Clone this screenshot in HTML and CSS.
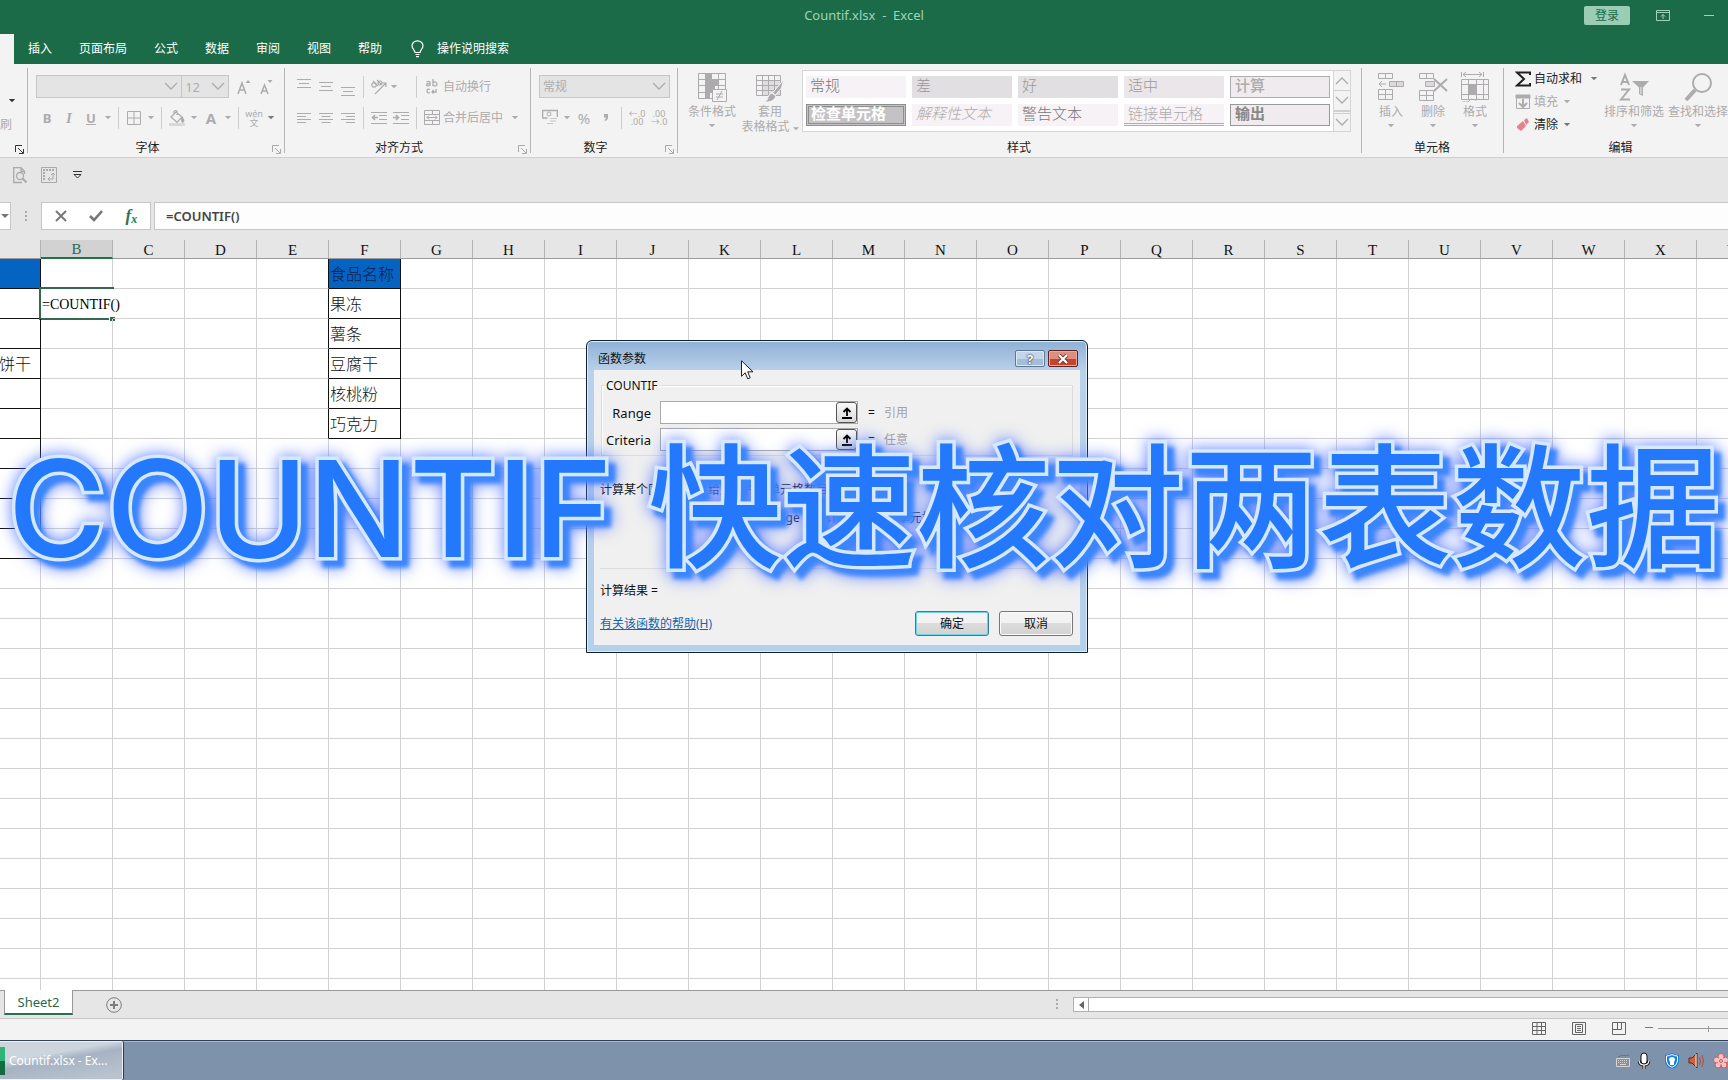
FILE: index.html
```html
<!DOCTYPE html>
<html lang="zh-CN">
<head>
<meta charset="utf-8">
<title>Countif.xlsx - Excel</title>
<link rel="stylesheet" href="styles.css">
</head>
<body>
<svg class="sprite" aria-hidden="true">
  <symbol id="caret" viewBox="0 0 8 5"><path d="M0 0h8L4 4z" fill="currentColor"/></symbol>
  <symbol id="chev" viewBox="0 0 14 9"><path d="M1 1l6 6 6-6" fill="none" stroke="currentColor" stroke-width="1.3"/></symbol>
  <symbol id="launch" viewBox="0 0 9 9"><path d="M.5 7V.5H7M3 3l5 5M8.500 4v4.500H4" fill="none" stroke="currentColor"/></symbol>
</svg>

<header class="titlebar">
  <div class="caption">
    <span class="doc-title">Countif.xlsx&nbsp; -&nbsp; Excel</span>
    <div class="window-tools">
      <button class="login">登录</button>
      <button class="plain" aria-label="功能区显示选项"><svg width="14" height="11" viewBox="0 0 14 11" fill="none" stroke="currentColor"><path d="M.5.5h13v10H.5zM.5 2.500h13M7 9V4.500M5 6.500l2-2 2 2"/></svg></button>
      <button class="plain" aria-label="最小化"><svg width="10" height="11" viewBox="0 0 10 11" stroke="currentColor"><path d="M0 5.500h10"/></svg></button>
    </div>
  </div>
  <nav class="tabs">
    <span class="tab-active"></span>
    <a href="#">插入</a><a href="#">页面布局</a><a href="#">公式</a><a href="#">数据</a><a href="#">审阅</a><a href="#">视图</a><a href="#">帮助</a>
    <a href="#" class="tell"><svg width="13" height="18" viewBox="0 0 13 18" fill="none" stroke="currentColor" stroke-width="1.200"><path d="M4 12.500C4 10 1 9 1 5.800a5.500 5 0 0 1 11 0C12 9 9 10 9 12.500zM4.500 14.500h4M5 16.700h3"/></svg>操作说明搜索</a>
  </nav>
</header>

<section class="ribbon">
  <div class="group clip">
    <div class="group-body"><svg class="car dark" width="6" height="4"><use href="#caret"/></svg><span>刷</span></div>
    <div class="group-title"><svg class="launch dark" width="9" height="9"><use href="#launch"/></svg></div>
  </div>

  <div class="group font">
    <div class="group-body">
      <div class="row">
        <button class="combo family" aria-label="字体"><span></span><svg width="14" height="9"><use href="#chev"/></svg></button>
        <button class="combo size" aria-label="字号"><span>12</span><svg width="14" height="9"><use href="#chev"/></svg></button>
        <button class="tb grow" aria-label="增大字号"><svg width="14" height="16" viewBox="0 0 14 16" fill="none" stroke="currentColor" stroke-width="1.500"><path d="M1 15L5 4l4 11M2.500 11h5"/><path d="M8.500 4L11 1l2.500 3z" fill="currentColor" stroke="none"/></svg></button>
        <button class="tb" aria-label="减小字号"><svg width="13" height="16" viewBox="0 0 13 16" fill="none" stroke="currentColor" stroke-width="1.500"><path d="M1 15l3.500-9L8 15M2.500 12h4"/><path d="M7.500 1h5L10 4z" fill="currentColor" stroke="none"/></svg></button>
      </div>
      <div class="row">
        <button class="tb"><b>B</b></button><button class="tb"><i>I</i></button><button class="tb"><u>U</u></button><svg class="car"><use href="#caret"/></svg>
        <span class="sep"></span>
        <button class="tb" aria-label="边框"><svg width="14" height="14" viewBox="0 0 14 14" fill="none" stroke="currentColor"><path d="M.5.5h13v13H.5zM7 .5v13M.5 7h13"/></svg></button><svg class="car"><use href="#caret"/></svg>
        <span class="sep"></span>
        <button class="tb" aria-label="填充颜色"><svg width="16" height="16" viewBox="0 0 16 16" fill="none" stroke="currentColor" stroke-width="1.200"><path d="M2 7l5-5 6 5-5 5.500zM5 4V1.500q1.500-2 3 0V5"/><path d="M13 7q3 4 1 5t-1-5z" fill="currentColor"/><path d="M0 14.500h16" stroke="#dcd6dc" stroke-width="3"/></svg></button><svg class="car"><use href="#caret"/></svg>
        <button class="tb"><b class="big-a">A</b></button><svg class="car"><use href="#caret"/></svg>
        <span class="sep"></span>
        <button class="tb pinyin"><span>wén</span><span>文</span></button><svg class="car mid"><use href="#caret"/></svg>
      </div>
    </div>
    <div class="group-title">字体<svg class="launch" width="9" height="9"><use href="#launch"/></svg></div>
  </div>

  <div class="group align">
    <div class="group-body">
      <div class="row">
        <button class="tb" aria-label="顶端对齐"><svg width="14" height="18" viewBox="0 0 14 18" stroke="currentColor"><path d="M0 1.500h14M2 5.500h10M0 9.500h14"/></svg></button>
        <button class="tb" aria-label="垂直居中"><svg width="14" height="18" viewBox="0 0 14 18" stroke="currentColor"><path d="M0 4.500h14M2 8.500h10M0 12.500h14"/></svg></button>
        <button class="tb" aria-label="底端对齐"><svg width="14" height="18" viewBox="0 0 14 18" stroke="currentColor"><path d="M0 9.500h14M2 13.500h10M0 17.500h14"/></svg></button>
        <span class="sep"></span>
        <button class="tb" aria-label="方向"><svg width="18" height="16" viewBox="0 0 18 16" fill="none" stroke="currentColor" stroke-width="1.200"><circle cx="4" cy="6" r="2.200"/><path d="M3 2l5 5M7 1l5 5"/><circle cx="10" cy="4" r="2"/><path d="M5 15L16 4M12 4h4v4"/></svg></button><svg class="car wide"><use href="#caret"/></svg>
        <span class="sep"></span>
        <button class="tb labelled"><svg width="22" height="16" viewBox="0 0 22 16" fill="none" stroke="currentColor" stroke-width="1.300"><path d="M5.500 3q3.500-1.500 3.500.5V7M9 4.500q-4 0-3.500 1.500T9 6.500M12 0v7M12 4q1-1.500 2.500-1T16 5t-1.500 2T12 6M9 10.500q-3-1-3 1.500t3 1.500M15 10v3h-4M12.500 11L11 13l1.500 1.500"/></svg>自动换行</button>
      </div>
      <div class="row">
        <button class="tb" aria-label="左对齐"><svg width="14" height="12" viewBox="0 0 14 12" stroke="currentColor"><path d="M0 1.500h14M0 4.500h9M0 7.500h14M0 10.500h9"/></svg></button>
        <button class="tb" aria-label="居中"><svg width="14" height="12" viewBox="0 0 14 12" stroke="currentColor"><path d="M0 1.500h14M2.500 4.500h9M0 7.500h14M2.500 10.500h9"/></svg></button>
        <button class="tb" aria-label="右对齐"><svg width="14" height="12" viewBox="0 0 14 12" stroke="currentColor"><path d="M0 1.500h14M5 4.500h9M0 7.500h14M5 10.500h9"/></svg></button>
        <span class="sep"></span>
        <button class="tb" aria-label="减少缩进"><svg width="16" height="14" viewBox="0 0 16 14" fill="none" stroke="currentColor"><path d="M0 1.500h16M8 4.500h8M8 8.500h8M0 12.500h16"/><path d="M7 6.500H1.500M4 4L1.500 6.500 4 9" stroke-width="1.600"/></svg></button>
        <button class="tb" aria-label="增加缩进"><svg width="16" height="14" viewBox="0 0 16 14" fill="none" stroke="currentColor"><path d="M0 1.500h16M8 4.500h8M8 8.500h8M0 12.500h16"/><path d="M0 6.500h5.500M3 4l2.500 2.500L3 9" stroke-width="1.600"/></svg></button>
        <span class="sep"></span>
        <button class="tb labelled"><svg width="22" height="15" viewBox="0 0 22 15" fill="none" stroke="currentColor"><path d="M3.500.5h15v14h-15zM3.500 4.500h15M3.500 10.500h15M11.500.5v4M11.500 10.500v4M6 7.500h10M8 5.500l-2 2 2 2M14 5.500l2 2-2 2"/></svg>合并后居中</button><svg class="car far"><use href="#caret"/></svg>
      </div>
    </div>
    <div class="group-title">对齐方式<svg class="launch" width="9" height="9"><use href="#launch"/></svg></div>
  </div>

  <div class="group number">
    <div class="group-body">
      <div class="row"><button class="combo format"><span>常规</span><svg width="14" height="9"><use href="#chev"/></svg></button></div>
      <div class="row">
        <button class="tb" aria-label="会计数字格式"><svg width="16" height="17" viewBox="0 0 16 17" fill="none" stroke="currentColor"><path d="M.5 1v8h5M.5 1.500h15V8" stroke-width="1.600"/><circle cx="7" cy="5" r="2"/><path d="M8 9.500h7M8 12h6M5 14.500h6" stroke="#c9c5c9"/></svg></button><svg class="car"><use href="#caret"/></svg>
        <button class="tb pct">%</button><button class="tb comma" aria-label="千位分隔样式"><svg width="6" height="9" viewBox="0 0 6 9" fill="currentColor"><path d="M1 1h4v3q0 3-3 4l-.5-1Q3 6 3 4.500H1z"/></svg></button>
        <span class="sep"></span>
        <button class="tb dec"><span>←.0</span><span>.00</span></button>
        <button class="tb dec"><span>.00</span><span>→.0</span></button>
      </div>
    </div>
    <div class="group-title">数字<svg class="launch" width="9" height="9"><use href="#launch"/></svg></div>
  </div>

  <div class="group styles">
    <div class="group-body across">
      <button class="large cond"><svg width="30" height="30" viewBox="0 0 30 30" fill="none" stroke="currentColor"><path d="M1.500 1.500h27v25h-27zM1.500 7.500h27M1.500 13.500h27M1.500 20.500h27M8.500 1v25M21.500 1v25" /><path d="M9 2h6v5H9zM9 8h12v5H9zM9 14h9v6H9zM9 21h4v5H9z" fill="currentColor" stroke="none"/><path d="M15.500 17.500h14v12h-14z" fill="#f3f3f3"/><path d="M19 22h7M19 25h7M25 19l-5 9"/></svg><span>条件格式</span><svg class="car"><use href="#caret"/></svg></button>
      <button class="large tablefmt"><svg width="30" height="30" viewBox="0 0 30 30" fill="none" stroke="currentColor"><path d="M1.500 3.500h24v20h-24z"/><path d="M7 8h18v15H7z" fill="#dedede" stroke="none"/><path d="M1.500 8.500h24M1.500 13.500h24M1.500 18.500h24M7.500 3v20M13.500 3v20M19.500 3v20"/><path d="M28.500 8l-2 8-6 7-3-2z" fill="currentColor" stroke="#f3f3f3"/><path d="M17 21l4 3q-2 7-13 6 5-1 5-5 1-3 4-4z" fill="currentColor" stroke="#f3f3f3"/></svg><span>套用</span><span>表格格式 <svg width="6" height="4"><use href="#caret"/></svg></span></button>
      <div class="gallery">
        <div class="swatches">
          <button class="sw strong">常规</button><button class="sw grey">差</button><button class="sw grey">好</button><button class="sw rose">适中</button><button class="sw calc">计算</button>
          <button class="sw check">检查单元格</button><button class="sw explain">解释性文本</button><button class="sw strong">警告文本</button><button class="sw linked">链接单元格</button><button class="sw output">输出</button>
        </div>
        <div class="scroller">
          <button aria-label="上一行"><svg class="up" width="14" height="9"><use href="#chev"/></svg></button>
          <button aria-label="下一行"><svg width="14" height="9"><use href="#chev"/></svg></button>
          <button class="more" aria-label="其他"><svg width="14" height="9"><use href="#chev"/></svg></button>
        </div>
      </div>
    </div>
    <div class="group-title">样式</div>
  </div>

  <div class="group cells">
    <div class="group-body across">
      <button class="large"><svg width="28" height="30" viewBox="0 0 28 30" fill="none" stroke="currentColor"><path d="M1.500 1.500h14v5h-14zM8.500 1.500v5M1.500 17.500h14v10h-14zM8.500 17v10M1.500 22.500h14M9 12H2M5 9l-3 3 3 3"/><path d="M12.500 9.500h14v5h-14zM19.500 9v5" fill="#dcd8dc"/></svg><span>插入</span><svg class="car"><use href="#caret"/></svg></button>
      <button class="large"><svg width="30" height="30" viewBox="0 0 30 30" fill="none" stroke="currentColor"><path d="M1.500 1.500h14v5h-14zM8.500 1.500v5M1.500 18.500h14v10h-14zM8.500 18v10M1.500 23.500h14"/><path d="M7.500 9.500h9v5h-9z" fill="#dcd8dc"/><path d="M16 7l13 12M29 7L16 19" stroke-width="2"/></svg><span>删除</span><svg class="car"><use href="#caret"/></svg></button>
      <button class="large"><svg width="30" height="30" viewBox="0 0 30 30" fill="none" stroke="currentColor"><path d="M1.500 0v5M23.500 0v5M3 2.500h19M6 0L3 2.500 6 5M19 0l3 2.500L19 5M1.500 7.500h27v20h-27zM1.500 12.500h27M1.500 22.500h27M8.500 7v20M16.500 7v20M23.500 7v20M2 30h6l3-3 5 1 3-1"/><path d="M9 13h7v9H9z" fill="currentColor"/></svg><span>格式</span><svg class="car"><use href="#caret"/></svg></button>
    </div>
    <div class="group-title">单元格</div>
  </div>

  <div class="group edit">
    <div class="group-body across">
      <div class="edit-list">
        <button class="on sum"><svg width="16" height="16" viewBox="0 0 16 16" fill="none" stroke="currentColor" stroke-width="2"><path d="M15 4V1.500H2L9 8l-7 6.500h13V12"/></svg>自动求和<svg class="car"><use href="#caret"/></svg></button>
        <button><svg width="16" height="16" viewBox="0 0 16 16" fill="none" stroke="currentColor"><path d="M1.500 1.500h13v13h-13z"/><path d="M1 1h14v3H1z" fill="currentColor"/><path d="M8 5v8M4 9l4 4 4-4" stroke-width="2"/></svg>填充<svg class="car"><use href="#caret"/></svg></button>
        <button class="on"><svg width="16" height="16" viewBox="0 0 16 16"><path d="M9 3l3-2 2 4-3 3zM8 4l3 5-5 5-4-3V9z" fill="#e5838d"/></svg>清除<svg class="car"><use href="#caret"/></svg></button>
      </div>
      <button class="large sort"><svg width="30" height="30" viewBox="0 0 30 30" fill="none" stroke="currentColor" stroke-width="2"><path d="M2 13L6 3l4 10M3.500 10h5M2 17.500h8L2 27.500h9"/><path d="M13 9h17l-6 6.500V24l-4-2v-6.500z" fill="currentColor" stroke="none"/><path d="M22 15v7" stroke="#f3f3f3" stroke-width="1"/></svg><span>排序和筛选</span><svg class="car"><use href="#caret"/></svg></button>
      <button class="large sort"><svg width="30" height="30" viewBox="0 0 30 30" fill="none" stroke="currentColor" stroke-width="2"><circle cx="19" cy="11" r="9"/><path d="M12 18L3 28" stroke-width="4"/></svg><span>查找和选择</span><svg class="car"><use href="#caret"/></svg></button>
    </div>
    <div class="group-title">编辑</div>
  </div>
</section>

<div class="quick">
  <button class="plain" aria-label="打印预览"><svg width="14" height="17" viewBox="0 0 14 17" fill="none" stroke="currentColor" stroke-width="1.300"><path d="M9 15.500H.700V.700H8l3.500 3.500V7M8 1v3.500h3.500"/><circle cx="7" cy="9" r="3.500"/><path d="M9.500 11.500l4 4" stroke-width="2"/></svg></button>
  <button class="plain" aria-label="数据透视表"><svg width="16" height="16" viewBox="0 0 16 16" fill="none" stroke="currentColor"><path d="M.5.5h15v15H.5z"/><path d="M2 3h11M3 5v9" stroke-width="2" stroke-dasharray="2 1"/><path d="M7 12h5V6M9 10l-2 2 2 2M10 8l2-2 2 2"/></svg></button>
  <button class="plain ink" aria-label="自定义快速访问工具栏"><svg width="9" height="8" viewBox="0 0 9 8" fill="none" stroke="currentColor"><path d="M0 .5h9M1 3.500h7L4.500 7z"/></svg></button>
</div>

<div class="formula-row">
  <button class="namebox" aria-label="名称框"><svg width="8" height="5"><use href="#caret"/></svg></button>
  <span class="dots"></span>
  <div class="formula-tools">
    <button aria-label="取消"><svg width="12" height="12" viewBox="0 0 12 12" stroke="#777" stroke-width="2"><path d="M1 1l10 10M11 1L1 11"/></svg></button>
    <button aria-label="输入"><svg width="14" height="12" viewBox="0 0 14 12" fill="none" stroke="#777" stroke-width="2.600"><path d="M1 6l4 4 8-9"/></svg></button>
    <button class="fx" aria-label="插入函数"><i>f</i><i class="sub">x</i></button>
  </div>
  <input class="formula" aria-label="编辑栏" value="=COUNTIF()">
</div>

<main class="sheet"><table id="grid"></table></main>

<div class="sheetbar">
  <button class="sheet-tab">Sheet2</button>
  <button class="add" aria-label="新工作表"><svg width="16" height="16" viewBox="0 0 16 16" fill="none" stroke="#7d7d7d"><circle cx="8" cy="8" r="7.300"/><path d="M8 4v8M4 8h8" stroke-width="2"/></svg></button>
  <span class="dots push"></span>
  <div class="hscroll"><button aria-label="向左滚动"><svg width="5" height="8" viewBox="0 0 5 8"><path d="M5 0v8L0 4z" fill="#666"/></svg></button></div>
</div>

<footer class="status">
  <button class="plain" aria-label="普通"><svg width="14" height="13" viewBox="0 0 14 13" fill="none" stroke="currentColor"><path d="M.5.5h13v12H.5zM.5 4.500h13M.5 8.500h13M5 .5v12M9.500.5v12"/></svg></button>
  <button class="plain" aria-label="页面布局"><svg width="14" height="13" viewBox="0 0 14 13" fill="none" stroke="currentColor"><path d="M.5.5h13v12H.5zM3.500 2.500h7v8h-7zM5 4.500h4M5 6.500h4M5 8.500h4"/></svg></button>
  <button class="plain" aria-label="分页预览"><svg width="14" height="13" viewBox="0 0 14 13" fill="none" stroke="currentColor"><path d="M.5.5h13v12H.5zM.5 7.500h9v-7M5.500.5v7"/></svg></button>
  <svg class="zoomline" width="83" height="9" viewBox="0 0 83 9" stroke="#9a9a9a"><path d="M0 3.500h8" stroke="#777"/><path d="M13 4.500h70M63.500 2v6"/></svg>
</footer>

<div class="taskbar">
  <button class="task"><span class="xl"></span>Countif.xlsx - Ex...</button>
  <div class="tray">
    <svg width="16" height="14" viewBox="0 0 16 14" fill="none" stroke="#d5d5d5"><path d="M1.500 4.500h13v8h-13z" fill="#8b8f93"/><path d="M3 6.500h10M3 8.500h10" stroke-dasharray="1 1"/><path d="M5 10.500h6"/><path d="M3 3q3-2 6-1.500T14 1" stroke="#6d7176"/></svg>
    <svg class="mic" width="12" height="18" viewBox="0 0 12 18"><path d="M1 8q0 5 5 5t5-5M6 13v4" fill="none" stroke="#111" stroke-width="3"/><rect x="3" y="1" width="6" height="11" rx="3" fill="#fff" stroke="#111"/><path d="M1 8q0 5 5 5t5-5M6 13v4" fill="none" stroke="#fff" stroke-width="1.200"/></svg>
    <svg class="shield" width="14" height="16" viewBox="0 0 14 16"><path d="M0 2q4 0 7-2 3 2 7 2v6q0 5-7 8-7-3-7-8z" fill="#1583dc"/><path d="M1.500 3q3 0 5.500-1.500Q9.500 3 12.500 3v5q0 4-5.500 6.500Q1.500 12 1.500 8z" fill="#1583dc" stroke="#fff"/><path d="M7 4q3 0 3 3l-1 2v3H5V9L4 7q0-3 3-3z" fill="#fff"/></svg>
    <svg class="speaker" width="16" height="16" viewBox="0 0 16 16"><path d="M1 5h3l5-5v15l-5-5H1z" fill="#d2603a" stroke="#60281a"/><path d="M8 1v13" stroke="#eee"/><path d="M11.500 4q2 4 0 8M14 2q3 6 0 12" fill="none" stroke="#b84a30"/></svg>
    <svg class="flower" width="16" height="16" viewBox="0 0 16 16"><g fill="#f6c1c4" stroke="#c85d64"><circle cx="8" cy="3.500" r="3"/><circle cx="12.500" cy="7" r="3"/><circle cx="11" cy="12" r="3"/><circle cx="5" cy="12" r="3"/><circle cx="3.500" cy="7" r="3"/></g><circle cx="8" cy="8" r="3.500" fill="#f6c1c4"/><circle cx="8" cy="8" r="1.500" fill="none" stroke="#c85d64"/></svg>
  </div>
</div>

<form class="dialog" role="dialog" aria-labelledby="dlg-title">
  <div class="dialog-title"><span id="dlg-title">函数参数</span>
    <button type="button" class="cap help">?</button>
    <button type="button" class="cap close" aria-label="关闭"><svg width="12" height="10" viewBox="0 0 12 10"><path d="M2 1l8 8M10 1L2 9" stroke="#6b3a35" stroke-width="4"/><path d="M2 1l8 8M10 1L2 9" stroke="#fff" stroke-width="2.200"/></svg></button>
  </div>
  <div class="dialog-body">
    <fieldset>
      <legend>COUNTIF</legend>
      <div class="arg"><label for="range">Range</label><div class="ref"><input id="range"><button type="button" aria-label="选择区域"><svg width="10" height="12" viewBox="0 0 10 12" fill="none" stroke="#000" stroke-width="1.800"><path d="M5 9V2M1.500 5L5 1.500 8.500 5M0 11h10"/></svg></button></div><span>=</span><span class="hint">引用</span></div>
      <div class="arg"><label for="criteria">Criteria</label><div class="ref"><input id="criteria"><button type="button" aria-label="选择条件"><svg width="10" height="12" viewBox="0 0 10 12" fill="none" stroke="#000" stroke-width="1.800"><path d="M5 9V2M1.500 5L5 1.500 8.500 5M0 11h10"/></svg></button></div><span>=</span><span class="hint">任意</span></div>
    </fieldset>
    <div class="about">
      <p>计算某个区域中满足给定条件的单元格数目</p>
      <p class="arg-help"><span>Range</span><span>要计算其中非空单元格数目的区域</span></p>
    </div>
    <p class="result">计算结果 =</p>
    <div class="actions"><a href="#">有关该函数的帮助(H)</a><button type="submit" class="ok">确定</button><button type="button">取消</button></div>
  </div>
</form>

<h1 class="banner">COUNTIF 快速核对两表数据</h1>

<svg class="pointer" width="13" height="20" viewBox="0 0 13 20"><path d="M.5.8v15.500l3.700-3.500 2.500 6 2.500-1-2.500-6h5.300z" fill="#fff" stroke="#222"/></svg>

<script src="grid.js"></script>
</body>
</html>
```

FILE: styles.css
```css
:root {
  --green: #1c6b48;
  --ui: "Noto Sans", "Noto Sans CJK SC", sans-serif;
  --song: "Liberation Serif", "Noto Sans CJK SC", serif;
  --off: #adabad;
  --line: #c6c6c6;
}
* { box-sizing: border-box; }
html, body { height: 100%; }
body {
  margin: 0;
  display: flex;
  flex-direction: column;
  position: relative;
  overflow: hidden;
  font: 12px/16px var(--ui);
  color: #222;
  background: #e6e6e6;
}
button, input { font: inherit; color: inherit; margin: 0; padding: 0; border: 0; background: none; border-radius: 0; }
button { display: flex; align-items: center; justify-content: center; white-space: nowrap; }
p { margin: 0; }
a { color: inherit; text-decoration: none; }
svg { flex: none; display: block; }
.sprite { position: absolute; width: 0; height: 0; }
.car { width: 12px; height: 4px; color: var(--off); }
.dark { color: #333; }
.mid { color: #777; }

/* title bar */
.titlebar { flex: none; background: var(--green); color: #fff; }
.caption { display: flex; align-items: center; justify-content: center; height: 30px; position: relative; color: #9fd3b8; }
.doc-title { font-size: 13px; padding-bottom: 1px; }
.window-tools { position: absolute; right: 14px; top: 6px; display: flex; align-items: center; }
.login { width: 46px; height: 19px; background: #9bcdb4; color: var(--green); border-radius: 2px; margin-right: 26px; }
.window-tools .plain + .plain { margin-left: 34px; }
.tabs { display: flex; height: 34px; align-items: center; padding-top: 3px; }
.tabs a { margin-right: 27px; }
.tab-active { align-self: stretch; width: 14px; margin: 1px 14px 0 0; background: #f3f3f3; }
.tabs .tell { display: flex; align-items: center; gap: 13px; margin-left: 2px; }

/* ribbon */
.ribbon { flex: none; display: flex; height: 94px; background: #f3f3f3; border-bottom: 1px solid #cfcfcf; color: var(--off); overflow: hidden; }
.group { flex: none; display: flex; flex-direction: column; position: relative; padding: 4px 8px 0; }
.group::after { content: ""; position: absolute; right: 0; top: 4px; bottom: 4px; width: 1px; background: #b5b5b5; }
.group-body { flex: none; height: 70px; padding-top: 7px; display: flex; flex-direction: column; gap: 8px; }
.group-body.across { flex-direction: row; gap: 0; padding-top: 0; }
.group-title { position: relative; color: #222; text-align: center; line-height: 20px; padding-right: 18px; }
.styles .group-title, .cells .group-title, .edit .group-title { padding: 0 2px 0 0; }
.edit .group-title { padding-right: 10px; }
.launch { position: absolute; right: -4px; top: 7px; color: #aaa; }
.launch.dark { color: #333; }
.clip { width: 28px; padding-left: 0; }
.clip .group-body { padding: 31px 0 0; gap: 14px; }
.clip .car { width: 8px; margin-left: 8px; }
.clip .group-title { height: 18px; }
.font { width: 257px; }
.align { width: 246px; }
.number { width: 147px; }
.styles { width: 684px; }
.cells { width: 142px; }
.edit { width: 235px; padding-right: 0; }
.row { display: flex; align-items: center; height: 23px; }
.combo { justify-content: space-between; height: 23px; border: 1px solid var(--line); background: #e4e4e4; padding: 0 3px; }
.combo.family { width: 150px; }
.combo.size { width: 48px; border-left: 0; font-size: 13px; }
.combo.format { width: 131px; }
.tb { width: 22px; height: 23px; flex: none; font-size: 13px; }
.tb b, .tb u { font-weight: 700; }
.tb i { font: italic 700 15px/20px "Liberation Serif", serif; }
.tb .big-a { font-size: 15px; }
.grow { margin-left: 4px; }
.sep { width: 1px; height: 22px; background: #cdcdcd; margin: 0 4px; flex: none; }
.pinyin { flex-direction: column; font-size: 9px; line-height: 9px; }
.pct { font-size: 15px; }
.dec { flex-direction: column; font-size: 9px; line-height: 8px; }
.car.wide { width: 8px; margin-right: 14px; }
.car.far { margin-left: 6px; }
.labelled { width: auto; font-size: 12px; }
.large { flex-direction: column; justify-content: flex-start; width: 42px; padding-top: 4px; line-height: 15px; }
.large > svg:first-child { margin-bottom: 2px; }
.large .car { margin-top: 5px; width: 10px; }
.large span svg { display: inline-block; }
.large.cond { width: 52px; }
.large.tablefmt { width: 64px; }
.large.sort { width: 60px; }
.large.sort + .sort { width: 68px; }
.gallery { display: flex; height: 62px; margin-top: 2px; border: 1px solid #d5d5d5; background: #fff; }
.swatches { display: grid; grid-template-columns: repeat(5, 100px); grid-auto-rows: 22px; gap: 6px; padding: 5px 3px; }
.sw { justify-content: flex-start; padding: 0 4px 4px; font: 15px/18px "Noto Sans CJK SC", sans-serif; font-weight: 300; background: #f6f2f5; }
.sw.strong { color: #777; }
.sw.grey { background: #e1dfe1; color: #999; }
.sw.rose { background: #ebe6e9; color: #999; }
.sw.calc { border: 1px solid #b0adb0; background: #efebee; font-weight: 500; }
.sw.check { border: 3px double #8e8e8e; background: #c4c2c4; color: #fff; font-weight: 700; padding-left: 2px; }
.sw.explain { font-style: italic; }
.sw.linked { border-bottom: 3px double #b0adb0; padding-bottom: 1px; }
.sw.output { border: 1px solid #999; background: #efebee; color: #888; font-weight: 700; }
.scroller { width: 17px; border-left: 1px solid #d5d5d5; display: grid; grid-template-rows: 20px 20px 20px; background: #f3f3f3; }
.scroller button { border-bottom: 1px solid #d0d0d0; }
.scroller .more { border-top: 3px double #d0d0d0; border-bottom: 0; }
.up { transform: rotate(180deg); }
.edit-list { width: 92px; display: flex; flex-direction: column; padding: 0 0 0 3px; }
.edit-list button { height: 22px; justify-content: flex-start; gap: 3px; }
.edit-list button + button { margin-top: 1px; }
.edit-list .on { color: #222; }
.edit-list .on .car { color: #777; }
.edit-list .sum .car { margin-left: 3px; }

/* quick access bar */
.quick { flex: none; display: flex; align-items: center; gap: 14px; height: 44px; padding: 0 13px 10px; color: #aaa; }
.quick .ink { color: #333; margin-left: 2px; }

/* formula bar */
.formula-row { flex: none; display: flex; align-items: stretch; height: 28px; }
.namebox { width: 11px; border: 1px solid var(--line); border-left: 0; background: #fff; color: #777; }
.dots { align-self: center; width: 2px; height: 11px; margin: 0 14px; background: repeating-linear-gradient(#aaa 0 2px, transparent 2px 4px); }
.formula-tools { display: flex; width: 110px; padding: 0 1px; border: 1px solid var(--line); background: #fff; }
.formula-tools button { flex: 1; }
.fx { color: #2c7554; font: 700 17px/20px "Liberation Serif", serif; }
.fx .sub { font-size: 12px; align-self: flex-end; }
.formula { flex: 1; min-width: 0; margin-left: 3px; padding: 0 11px; border: 1px solid var(--line); border-right: 0; background: #fdfdfd; font-size: 13px; font-weight: 600; color: #444; }

/* cells */
.sheet { flex: 1; min-height: 0; overflow: hidden; padding-top: 10px; background: linear-gradient(#e6e6e6 29px, #fff 29px); }
table { table-layout: fixed; border-collapse: separate; border-spacing: 0; font: 16px/20px var(--song); color: #111; }
.col-a { width: 41px; }
.col { width: 72px; }
th { height: 19px; padding: 3px 0 0; font-size: 15px; line-height: 15px; font-weight: 400; border-right: 1px solid #b4b4b4; border-bottom: 1px solid #9b9b9b; background: #e6e6e6; }
th.picked { background: #d2d2d2; color: #2c6b4c; border-bottom: 2px solid #217346; padding-top: 2px; }
td { height: 30px; padding: 3px 1px 0; border-right: 1px solid #d2d2d2; border-bottom: 1px solid #d2d2d2; white-space: nowrap; position: relative; font-weight: 300; }
td.boxed { border-color: #111; }
td.edge { border-right-color: #111; }
td.head { background: #0563c1; color: #0b1f50; }
td.tail { direction: rtl; padding-right: 10px; }
td.editing { font-size: 14px; color: #000; font-weight: 400; border-right-color: transparent; }
.selection { position: absolute; left: -2px; top: -2px; right: -2px; bottom: -2px; border: solid #35694f; border-width: 2px 0 2px 2px; }
.selection::after { content: ""; position: absolute; right: -1px; bottom: -3px; width: 6px; height: 4px; background: linear-gradient(90deg, #fff 1px, #35694f 1px); }

/* sheet tabs and status */
.sheetbar { flex: none; display: flex; align-items: center; height: 29px; border-top: 1px solid #999; border-bottom: 1px solid #c8c8c8; background: #e6e6e6; }
.sheet-tab { width: 69px; height: 25px; margin: -1px 33px 0 4px; align-self: flex-start; background: #fff; color: #28674a; border: 1px solid #999; border-width: 0 1px 2px; border-bottom-color: #2e6e50; font-size: 13px; }
.push { margin-left: auto; margin-right: 15px; }
.hscroll { width: 38%; max-width: 655px; height: 15px; border: 1px solid #b2b2b2; border-right: 0; background: #fff; }
.hscroll button { width: 15px; height: 13px; border-right: 1px solid #aaa; }
.status { flex: none; display: flex; align-items: center; justify-content: flex-end; gap: 26px; height: 21px; padding-bottom: 2px; background: #f3f3f3; color: #666; }
.status .zoomline { margin-left: -7px; }

/* taskbar */
.taskbar { flex: none; display: flex; justify-content: space-between; align-items: stretch; height: 40px; border-top: 1px solid #32405c; background: #7e92ab; box-shadow: inset 0 1px #aab9cc; }
.task { width: 123px; justify-content: flex-start; gap: 4px; color: #fff; border: 1px solid #eef2f6; border-left: 0; border-radius: 0 2px 2px 0; box-shadow: 1px 0 #2c3a4e; background: linear-gradient(170deg, #ccd4dc 0 35%, #a6b3c2 48%, #b9c3cf 90%); }
.xl { width: 5px; height: 28px; background: linear-gradient(#2fb377 50%, #156b40 50%); }
.tray { display: flex; align-items: center; }
.mic { margin-left: 7px; }
.shield { margin-left: 15px; }
.speaker { margin-left: 9px; }
.flower { margin: 0 -1px 0 9px; }

/* function arguments window */
.dialog { position: absolute; left: 586px; top: 340px; width: 502px; height: 313px; display: flex; flex-direction: column; padding: 0 7px 7px; border: 1px solid #10202e; border-radius: 6px 6px 0 0; background: linear-gradient(#8fb0d5, #b9d1ea 30px, #b5d0ea); box-shadow: inset 0 0 0 1px #dcecf8; color: #111; }
.dialog-title { display: flex; align-items: center; height: 29px; padding: 6px 2px 0 4px; gap: 3px; }
.dialog-title span { flex: 1; }
.cap { width: 30px; height: 17px; border: 1px solid #5d7894; border-radius: 2px; box-shadow: inset 0 0 0 1px #dbe8f5; background: linear-gradient(#c3d5e9 50%, #a5bdd8 50%); }
.help { font-size: 13px; font-weight: 700; color: #fff; text-shadow: 0 0 2px #123, 0 0 1px #123; }
.close { border-color: #5c2420; box-shadow: inset 0 0 0 1px #e9aba0; background: linear-gradient(#de8e7d 50%, #c4452c 50%); }
.dialog-body { flex: 1; display: flex; flex-direction: column; padding: 7px 7px 8px 6px; background: #f0f0f0; }
fieldset { margin: 0 0 0 1px; padding: 8px 0 5px; border: 1px solid #dcdcdc; box-shadow: inset 1px 1px #fff; min-width: 0; height: 79px; display: flex; flex-direction: column; gap: 4px; }
legend { margin-left: 3px; padding: 1px 1px 0; font-size: 12px; }
.arg { display: flex; align-items: center; height: 23px; margin-top: -1px; }
.arg + .arg { margin-top: 0; }
.arg label { width: 49px; text-align: right; font-size: 13px; margin-right: 9px; }
.ref { display: flex; width: 198px; height: 23px; border: 1px solid #aaa; background: #fff; margin-right: 10px; }
.ref input { flex: 1; min-width: 0; }
.ref button { width: 21px; border: 1px solid #555; border-radius: 3px; background: linear-gradient(#fafafa, #dadada); }
.hint { color: #a2a2a2; margin-left: 9px; }
.about { height: 113px; padding-top: 26px; border-bottom: 1px solid #dcdcdc; }
.arg-help { display: flex; gap: 14px; padding: 12px 0 0 164px; }
.result { padding: 14px 0 12px; }
.actions { display: flex; align-items: center; gap: 10px; }
.actions a { flex: 1; color: #1c62ab; text-decoration: underline; }
.actions button { width: 74px; height: 25px; border: 1px solid #777; border-radius: 3px; background: linear-gradient(#f3f3f3 50%, #dcdcdc 50%, #d2d2d2); box-shadow: inset 0 0 0 1px #fafafa; }
.actions .ok { border-color: #2f7f9e; box-shadow: inset 0 0 0 1px #6fd3ee; }

/* video caption */
.banner {
  position: absolute;
  left: 0;
  right: 0;
  top: 408px;
  margin: 0;
  text-align: center;
  white-space: nowrap;
  pointer-events: none;
  font: 500 134px/200px "Inter", "Noto Sans CJK SC", sans-serif;
  color: #2478fc;
  -webkit-text-stroke: 7px #d4e8ff;
  paint-order: stroke fill;
  filter: drop-shadow(7px 7px 2px #3b86fd) drop-shadow(0 0 8px rgba(80, 115, 255, 0.9));
}
.pointer { position: absolute; left: 741px; top: 360px; }
```

FILE: grid.js
```js
const table = document.getElementById("grid");
const letters = ["", ..."BCDEFGHIJKLMNOPQRSTUVWXY"];
const ROWS = 25;
const foods = ["食品名称", "果冻", "薯条", "豆腐干", "核桃粉", "巧克力"];

const cols = document.createElement("colgroup");
letters.forEach((_, i) => {
  const col = document.createElement("col");
  col.className = i ? "col" : "col-a";
  cols.append(col);
});
table.append(cols);
table.style.width = 41 + 72 * (letters.length - 1) + "px";

const header = table.createTHead().insertRow();
letters.forEach((letter) => {
  const th = document.createElement("th");
  th.textContent = letter;
  if (letter === "B") th.className = "picked";
  header.append(th);
});

const body = table.createTBody();
for (let r = 1; r <= ROWS; r++) {
  const row = body.insertRow();
  letters.forEach((letter, c) => {
    const td = row.insertCell();
    if (c === 0 && r <= 10) td.classList.add("boxed");
    if (letter === "E" && r <= foods.length) td.classList.add("edge");
    if (letter === "F" && r <= foods.length) {
      td.classList.add("boxed");
      td.textContent = foods[r - 1];
    }
    if (r === 1 && (c === 0 || letter === "F")) td.classList.add("head");
    if (r === 4 && c === 0) {
      td.classList.add("tail");
      td.textContent = "饼干";
    }
    if (r === 2 && letter === "B") {
      td.classList.add("editing");
      td.textContent = "=COUNTIF()";
      const box = document.createElement("span");
      box.className = "selection";
      td.append(box);
    }
  });
}
```
